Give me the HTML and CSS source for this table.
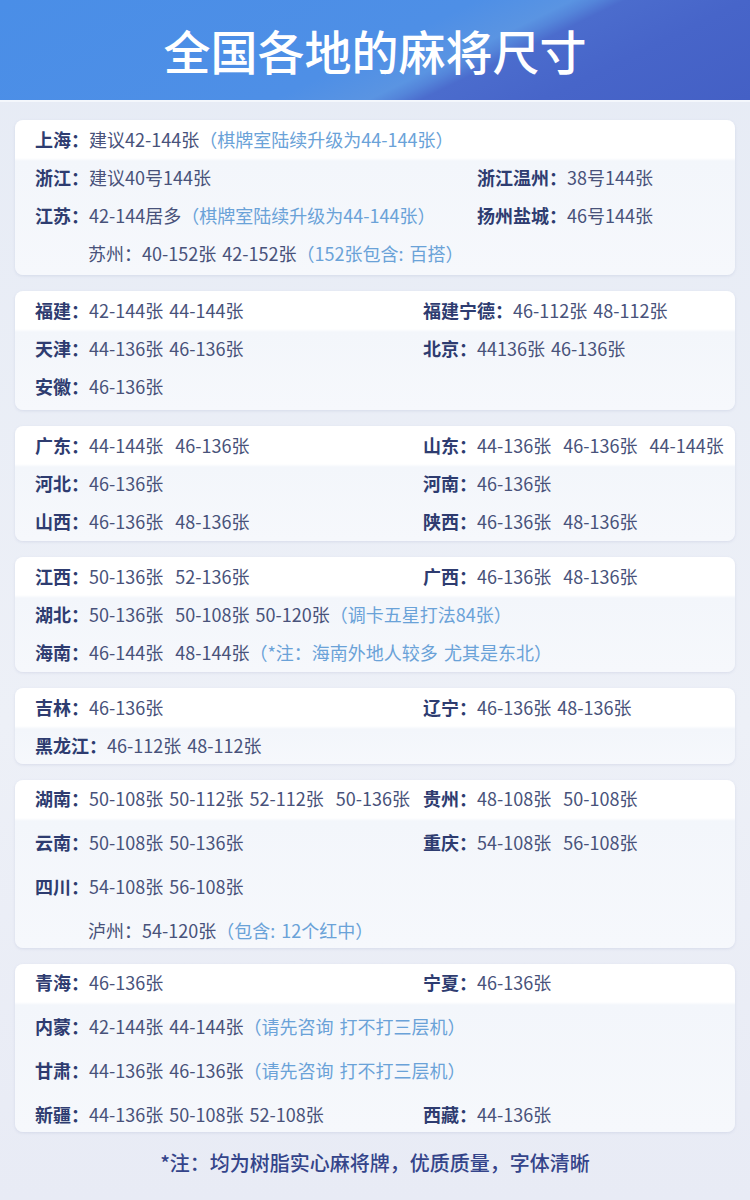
FILE: index.html
```html
<!DOCTYPE html>
<html lang="zh-CN">
<head>
<meta charset="utf-8">
<title>全国各地的麻将尺寸</title>
<link rel="stylesheet" href="styles.css">
</head>
<body>
<header class="hero"><h1>全国各地的麻将尺寸</h1></header>
<main class="list">
  <section class="card wide pb3">
    <div class="row"><span class="item"><b>上海：</b>建议42-144张<span class="note">（棋牌室陆续升级为44-144张）</span></span></div>
    <div class="row"><span class="item"><b>浙江：</b>建议40号144张</span><span class="item"><b>浙江温州：</b>38号144张</span></div>
    <div class="row"><span class="item"><b>江苏：</b>42-144居多<span class="note">（棋牌室陆续升级为44-144张）</span></span><span class="item"><b>扬州盐城：</b>46号144张</span></div>
    <div class="row"><span class="item sub">苏州：40-152张 42-152张<span class="note">（152张包含: 百搭）</span></span></div>
  </section>
  <section class="card pb5">
    <div class="row"><span class="item"><b>福建：</b>42-144张 44-144张</span><span class="item"><b>福建宁德：</b>46-112张 48-112张</span></div>
    <div class="row"><span class="item"><b>天津：</b>44-136张 46-136张</span><span class="item"><b>北京：</b>44136张 46-136张</span></div>
    <div class="row"><span class="item"><b>安徽：</b>46-136张</span></div>
  </section>
  <section class="card">
    <div class="row"><span class="item"><b>广东：</b>44-144张  46-136张</span><span class="item"><b>山东：</b>44-136张  46-136张  44-144张</span></div>
    <div class="row"><span class="item"><b>河北：</b>46-136张</span><span class="item"><b>河南：</b>46-136张</span></div>
    <div class="row"><span class="item"><b>山西：</b>46-136张  48-136张</span><span class="item"><b>陕西：</b>46-136张  48-136张</span></div>
  </section>
  <section class="card">
    <div class="row"><span class="item"><b>江西：</b>50-136张  52-136张</span><span class="item"><b>广西：</b>46-136张  48-136张</span></div>
    <div class="row"><span class="item"><b>湖北：</b>50-136张  50-108张 50-120张<span class="note">（调卡五星打法84张）</span></span></div>
    <div class="row"><span class="item"><b>海南：</b>46-144张  48-144张<span class="note">（*注：海南外地人较多 尤其是东北）</span></span></div>
  </section>
  <section class="card pb0">
    <div class="row"><span class="item"><b>吉林：</b>46-136张</span><span class="item"><b>辽宁：</b>46-136张 48-136张</span></div>
    <div class="row"><span class="item"><b>黑龙江：</b>46-112张 48-112张</span></div>
  </section>
  <section class="card tall">
    <div class="row"><span class="item"><b>湖南：</b>50-108张 50-112张 52-112张  50-136张</span><span class="item"><b>贵州：</b>48-108张  50-108张</span></div>
    <div class="row"><span class="item"><b>云南：</b>50-108张 50-136张</span><span class="item"><b>重庆：</b>54-108张  56-108张</span></div>
    <div class="row"><span class="item"><b>四川：</b>54-108张 56-108张</span></div>
    <div class="row"><span class="item sub">泸州：54-120张<span class="note">（包含: 12个红中）</span></span></div>
  </section>
  <section class="card tall">
    <div class="row"><span class="item"><b>青海：</b>46-136张</span><span class="item"><b>宁夏：</b>46-136张</span></div>
    <div class="row"><span class="item"><b>内蒙：</b>42-144张 44-144张<span class="note">（请先咨询 打不打三层机）</span></span></div>
    <div class="row"><span class="item"><b>甘肃：</b>44-136张 46-136张<span class="note">（请先咨询 打不打三层机）</span></span></div>
    <div class="row"><span class="item"><b>新疆：</b>44-136张 50-108张 52-108张</span><span class="item"><b>西藏：</b>44-136张</span></div>
  </section>
</main>
<p class="footnote">*注：均为树脂实心麻将牌，优质质量，字体清晰</p>
</body>
</html>
```

FILE: styles.css
```css
* { box-sizing: border-box; }
html, body { margin: 0; padding: 0; }
body {
  width: 750px;
  min-height: 1200px;
  background: linear-gradient(180deg, #e6ebf5 0%, #edf0f7 60%, #e8ebf5 100%);
  font-family: "Noto Sans CJK SC", "Noto Sans", sans-serif;
  color: #48527a;
}
.hero {
  height: 102px;
  background: linear-gradient(154deg, #4a8ee7 0%, #4e8fe6 50%, #5a94e2 60%, #5485da 62.5%, #4b6ccd 65.5%, #4765c9 78%, #4460c5 100%);
  border-bottom: 2px solid #f4f7fc;
  display: flex;
  align-items: center;
  justify-content: center;
}
.hero h1 {
  margin: 0;
  color: #fff;
  font-size: 47px;
  font-weight: 500;
  line-height: 1;
  padding-bottom: 2px;
}
.list {
  padding: 18px 15px 0;
  display: flex;
  flex-direction: column;
  gap: 16px;
}
.card {
  border-radius: 8px;
  background: linear-gradient(180deg, #ffffff 0, #ffffff 38px, #f3f6fb 41px, #f6f8fc 100%);
  box-shadow: 0 1px 3px rgba(120, 135, 175, 0.18);
  padding: 0 0 1px 20px;
  display: flex;
  flex-direction: column;
}
.pb0 { padding-bottom: 0; }
.pb3 { padding-bottom: 3px; }
.pb5 { padding-bottom: 5px; }
.row {
  height: 38px;
  flex: none;
  display: grid;
  grid-template-columns: 388px 1fr;
  align-items: center;
  font-size: 18px;
  white-space: pre;
}
.wide .row { grid-template-columns: 442px 1fr; }
.tall { gap: 8px; padding-bottom: 0; }
.tall .row { height: 36px; }
.item { white-space: pre; word-spacing: 2px; }
.item b { color: #2e3c70; font-weight: 700; }
.sub { padding-left: 53px; }
.note { color: #6aa2d8; }
.footnote {
  margin: 16px 0 0;
  text-align: center;
  font-size: 20px;
  color: #34448a;
  font-weight: 500;
}
```
